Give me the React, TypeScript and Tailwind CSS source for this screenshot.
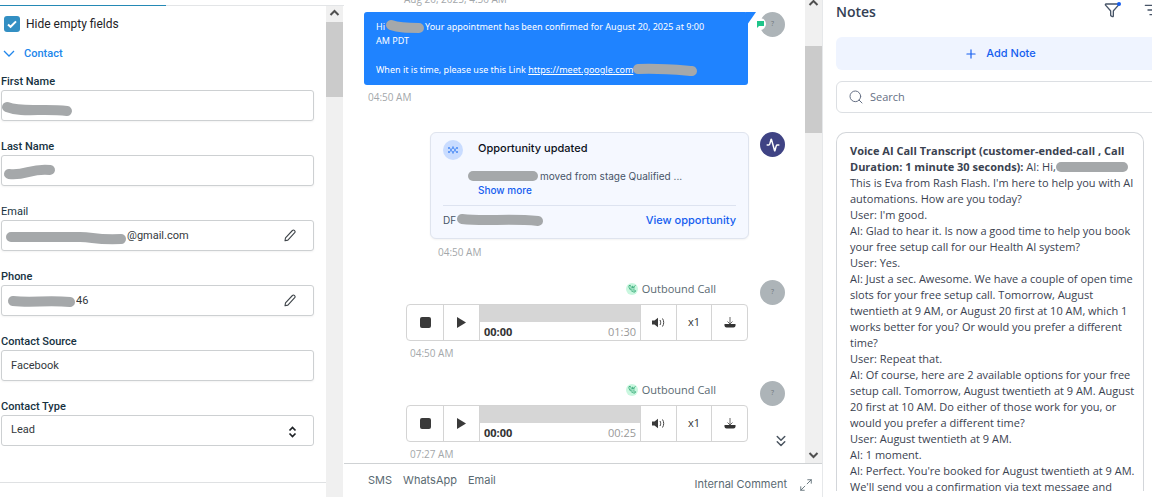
import { useState, type ReactNode } from 'react';
import { Activity, ChevronsDown, Filter, ListFilter, Maximize2, Plus, Search } from 'lucide-react';

const transcript = [
  "This is Eva from Rash Flash. I'm here to help you with AI\nautomations. How are you today?",
  "User: I'm good.",
  'AI: Glad to hear it. Is now a good time to help you book\nyour free setup call for our Health AI system?',
  'User: Yes.',
  'AI: Just a sec. Awesome. We have a couple of open time\nslots for your free setup call. Tomorrow, August\ntwentieth at 9 AM, or August 20 first at 10 AM, which 1\nworks better for you? Or would you prefer a different\ntime?',
  'User: Repeat that.',
  'AI: Of course, here are 2 available options for your free\nsetup call. Tomorrow, August twentieth at 9 AM. August\n20 first at 10 AM. Do either of those work for you, or\nwould you prefer a different time?',
  'User: August twentieth at 9 AM.',
  'AI: 1 moment.',
  "AI: Perfect. You're booked for August twentieth at 9 AM.\nWe'll send you a confirmation via text message and",
];

function Scribble({ width, height, d, className = '' }: { width: number; height: number; d: string; className?: string }) {
  return (
    <svg width={width} height={height} className={`shrink-0 overflow-visible ${className}`} fill="none" aria-hidden="true">
      <path d={d} stroke="#a5a8aa" strokeWidth="10" strokeLinecap="round" strokeLinejoin="round" />
    </svg>
  );
}

function ScrollArrow({ up }: { up?: boolean }) {
  return (
    <svg width="17" height="16" fill="none" stroke="#505050" strokeWidth="2" className="shrink-0" aria-hidden="true">
      <path d={up ? 'M4.5 9 8.5 5l4 4' : 'M4.5 6l4 4 4-4'} />
    </svg>
  );
}

function PencilIcon() {
  return (
    <svg width="12" height="13" viewBox="0 0 12 13" fill="none" stroke="#3f454a" strokeWidth="1.1" strokeLinejoin="round" aria-hidden="true">
      <path d="M1 11.8 1.5 8.8 8.4 1.5a1.6 1.6 0 0 1 2.3 2.2L3.9 11.1z" />
    </svg>
  );
}

function Field({ id, label, scribble, value = '', pencil, light }: {
  id: string;
  label: string;
  scribble?: ReactNode;
  value?: string;
  pencil?: boolean;
  light?: boolean;
}) {
  return (
    <div>
      <label htmlFor={id} className={`block text-[11px] leading-4 text-[#16323f] ${light ? '' : 'font-medium'}`}>
        {label}
      </label>
      <div className="flex h-[31px] items-center rounded-[3px] border border-[#cdd0d2] bg-white shadow-xs">
        {scribble}
        <input
          id={id}
          defaultValue={value}
          className={`h-full min-w-0 flex-1 bg-transparent text-[11px] text-[#33383c] outline-none ${scribble ? '' : 'pl-[9px]'}`}
        />
        {pencil && (
          <button type="button" aria-label={`Edit ${label}`} className="mr-[17px]">
            <PencilIcon />
          </button>
        )}
      </div>
    </div>
  );
}

function ContactPanel() {
  const [hideEmpty, setHideEmpty] = useState(true);

  return (
    <aside className="flex w-[344px] shrink-0 flex-col overflow-hidden pt-[5px] font-[Roboto,sans-serif]">
      <div className="flex h-px shrink-0 bg-[#e3e5e7]">
        <div className="w-[166px] bg-[#2489b5]" />
      </div>
      <div className="flex min-h-0 flex-1">
        <div className="min-w-0 flex-1 pt-[10px]">
          <label className="flex h-4 items-center gap-[6px] pl-1 text-[12px] text-[#1e2226]">
            <span className="relative flex size-4">
              <input
                type="checkbox"
                checked={hideEmpty}
                onChange={(event) => setHideEmpty(event.target.checked)}
                className="size-4 appearance-none rounded-[3px] bg-[#338fc3]"
              />
              {hideEmpty && (
                <svg viewBox="0 0 16 16" className="pointer-events-none absolute inset-0" fill="none" stroke="#fff" strokeWidth="2">
                  <path d="M4 8.4l2.6 2.4L12 5.4" />
                </svg>
              )}
            </span>
            Hide empty fields
          </label>
          <button type="button" className="mt-[14px] flex h-4 items-center gap-[9px] pl-[3px] text-[11px] font-medium text-[#2186eb]">
            <svg width="12" height="8" fill="none" stroke="currentColor" strokeWidth="1.3" aria-hidden="true">
              <path d="M1 1l5 5 5-5" />
            </svg>
            Contact
          </button>

          <div className="mt-3 flex flex-col gap-[18px] pr-3 pl-px">
            <Field
              id="first-name"
              label="First Name"
              scribble={<Scribble width={72} height={14} d="M5 6C20 12 40 7 65 10" className="mt-1" />}
            />
            <Field id="last-name" label="Last Name" scribble={<Scribble width={58} height={14} d="M7 10C24 12 28 4 48 6" />} />
            <Field
              id="email"
              label="Email"
              light
              pencil
              value="@gmail.com"
              scribble={<Scribble width={125} height={14} d="M9 8H78C92 8 92 11 119 10" />}
            />
            <Field id="phone" label="Phone" pencil value="46" scribble={<Scribble width={74} height={14} d="M11 7C30 9 45 6 68 8" />} />
            <Field id="source" label="Contact Source" value="Facebook" />
            <div>
              <label htmlFor="type" className="block text-[11px] leading-4 font-medium text-[#16323f]">
                Contact Type
              </label>
              <div className="relative">
                <select
                  id="type"
                  className="block h-[31px] w-full appearance-none rounded-[3px] border border-[#cdd0d2] bg-white pl-[9px] text-[11px] text-[#33383c]"
                >
                  <option>Lead</option>
                </select>
                <svg width="9" height="12" className="pointer-events-none absolute top-[11px] right-[17px]" fill="none" stroke="#1d2125" strokeWidth="1.7">
                  <path d="M1.5 4.5l3-3 3 3M1.5 7.5l3 3 3-3" />
                </svg>
              </div>
            </div>
          </div>
          <hr className="mt-9 border-[#dfe1e3]" />
        </div>
        <div className="mr-px flex w-[17px] shrink-0 flex-col bg-[#f0f0f0]">
          <ScrollArrow up />
          <div className="h-[75px] bg-[#cbcbcb]" />
        </div>
      </div>
    </aside>
  );
}

function Avatar() {
  return (
    <div className="flex size-[25px] shrink-0 items-center justify-center rounded-full bg-[#adb4b8] text-[7px] text-[#6e767b]">?</div>
  );
}

function Time({ children }: { children: ReactNode }) {
  return <time className="mt-1 block h-[17px] pl-1 text-[10px] leading-[17px] text-[#a3a7aa]">{children}</time>;
}

function CallRow({ duration, time }: { duration: string; time: string }) {
  return (
    <div className="mt-[19px] flex justify-end gap-3">
      <div className="w-[342px]">
        <div className="flex h-[18px] items-center justify-end gap-1 pr-8 text-[11px] text-[#5a6a72]">
          <svg width="12" height="12" viewBox="0 0 12 12" fill="none" aria-hidden="true">
            <circle cx="6" cy="6" r="6" fill="#c9f7df" />
            <path d="M3 2.6c-.8 2.6 3 7 6 6.4l.6-1.3-1.8-1-1 .8L4.7 5.2l.7-1L4.3 2.3zM6.5 4.9 9.6 2.4M6.6 2.8v2.1h2.2" stroke="#27a26d" strokeWidth=".8" />
          </svg>
          Outbound Call
        </div>
        <div className="mt-[6px] flex h-[37px] overflow-hidden rounded border border-[#d4d4d4] bg-white text-[#333]">
          <button type="button" aria-label="Stop" className="flex w-9 items-center justify-center">
            <span className="size-[11px] rounded-xs bg-[#3a3a3a]" />
          </button>
          <button type="button" aria-label="Play" className="flex w-[37px] items-center justify-center border-x border-[#d4d4d4]">
            <svg width="9" height="11" fill="#3a3a3a">
              <path d="M0 0l9 5.5L0 11z" />
            </svg>
          </button>
          <div className="flex flex-1 flex-col">
            <div className="h-[17px] bg-[#d6d6d6]" />
            <div className="flex flex-1 items-center justify-between px-1 text-[11px] leading-none">
              <b>00:00</b>
              <span className="text-[#999]">{duration}</span>
            </div>
          </div>
          <button type="button" aria-label="Volume" className="flex w-9 items-center justify-center border-l border-[#d4d4d4]">
            <svg width="13" height="11" viewBox="0 0 13 11" fill="none" stroke="#444">
              <path d="M0 3.5h2.5L6 .7v9.6L2.5 7.5H0z" fill="#3a3a3a" stroke="none" />
              <path d="M8 3c.9 1.5.9 3.5 0 5M10.5 1.5c1.6 2.4 1.6 5.6 0 8" />
            </svg>
          </button>
          <button type="button" className="w-9 border-x border-[#d4d4d4] text-[11px]">
            x1
          </button>
          <button type="button" aria-label="Download" className="flex w-[35px] items-center justify-center">
            <svg width="12" height="11" viewBox="0 0 12 11" fill="none" stroke="#555" strokeWidth=".9">
              <path d="M.5 7h11v1.500a2 2 0 0 1-2 2h-7a2 2 0 0 1-2-2z" fill="#333" stroke="none" />
              <path d="M6 0v7M3.5 4.5 6 7l2.500-2.500" />
            </svg>
          </button>
        </div>
        <Time>{time}</Time>
      </div>
      <div className="mr-5">
        <Avatar />
      </div>
    </div>
  );
}

function Conversation() {
  return (
    <main className="flex min-w-0 flex-1 flex-col border-r border-[#e6e8ea] font-['Open_Sans',sans-serif]">
      <div className="flex min-h-0 flex-1 border-b border-[#cfd2d4]">
        <div className="relative min-w-0 flex-1 overflow-hidden">
          <p className="-mt-2 h-5 pl-[60px] text-[10px] leading-[14px] text-[#a3a7aa]">Aug 20, 2025, 4:50 AM</p>
          <div className="flex justify-end gap-3">
            <div className="w-[384px]">
              <div className="relative h-[73px] rounded-[3px] bg-[#1f83ff] px-3 pt-2 font-['Noto_Sans',sans-serif] text-[9px] leading-[14px] whitespace-nowrap text-white">
                <svg width="10" height="14" className="absolute top-0 -right-2" fill="#1f83ff">
                  <path d="M0 0h10L1 13z" />
                </svg>
                <p className="flex items-center">
                  Hi
                  <Scribble width={40} height={10} d="M6 3C14 6 22 6 34 6" />
                  Your appointment has been confirmed for August 20, 2025 at 9:00
                </p>
                <p>AM PDT</p>
                <p className="mt-[15px] flex items-center">
                  When it is time, please use this Link&nbsp;
                  <a href="#meet" className="underline">
                    https://meet.google.com
                  </a>
                  <Scribble width={64} height={10} d="M5 4C25 3 35 4 59 6" />
                </p>
              </div>
              <Time>04:50 AM</Time>
            </div>
            <div className="relative mr-5">
              <Avatar />
              <div className="absolute top-[6px] -left-[6px] flex size-3 items-center justify-center rounded-full bg-white">
                <svg width="7" height="7" fill="#1fc48a">
                  <path d="M0 0h7v5H2L0 7z" />
                </svg>
              </div>
            </div>
          </div>

          <div className="mt-[26px] flex justify-end gap-[11px]">
            <div className="w-[319px]">
              <section className="h-[107px] rounded-md border border-[#dfe4ee] bg-[#f5f8ff] px-3 pt-[7px] font-[Inter,sans-serif] shadow-xs">
                <div className="flex gap-[15px]">
                  <svg width="20" height="20" className="shrink-0" fill="none" stroke="#4d8cf5" aria-hidden="true">
                    <circle cx="10" cy="10" r="10" fill="#c9dcff" stroke="none" />
                    <path d="M6 7v2M6 11v2M10 6.5v2.500M10 11v2.500M14 7v2M14 11v2M8 8.500v3M12 8.500v3" strokeWidth="1.6" />
                  </svg>
                  <h3 className="text-[11px] leading-4 font-medium text-[#0c111b]">Opportunity updated</h3>
                </div>
                <p className="mt-[9px] flex h-[14px] items-center gap-[2px] pl-[25px] text-[10px] leading-[14px] text-[#475467]">
                  <Scribble width={70} height={10} d="M5 5H65" />
                  moved from stage Qualified ...
                </p>
                <button type="button" className="block h-[14px] pl-[35px] text-[10px] leading-[14px] font-medium text-[#155eef]">
                  Show more
                </button>
                <div className="mt-2 flex items-center justify-between border-t border-[#dde3f0] pt-1">
                  <span className="flex items-center text-[10px] text-[#475467]">
                    DF
                    <Scribble width={88} height={10} d="M6 4C30 7 50 3 82 6" />
                  </span>
                  <a href="#opportunity" className="text-[11px] leading-5 font-medium text-[#155eef]">
                    View opportunity
                  </a>
                </div>
              </section>
              <div className="pt-px pl-1">
                <Time>04:50 AM</Time>
              </div>
            </div>
            <div className="mr-5 flex size-[25px] shrink-0 items-center justify-center rounded-full bg-[#3f4384] text-white">
              <Activity className="size-[14px]" strokeWidth={2.5} />
            </div>
          </div>

          <CallRow duration="01:30" time="04:50 AM" />
          <CallRow duration="00:25" time="07:27 AM" />

          <button type="button" aria-label="Scroll to latest" className="absolute right-[15px] bottom-[13px] text-[#4b5560]">
            <ChevronsDown className="size-[18px]" />
          </button>
        </div>
        <div className="flex w-[17px] shrink-0 flex-col bg-[#f0f0f0]">
          <div className="-mt-1">
            <ScrollArrow up />
          </div>
          <div className="mt-[34px] h-[87px] bg-[#cbcbcb]" />
          <div className="mt-auto">
            <ScrollArrow />
          </div>
        </div>
      </div>
      <footer className="flex h-[33px] shrink-0 justify-between pl-6 font-[Inter,sans-serif] text-[11px] text-[#5a6a72]">
        <div className="flex items-center gap-[11px]">
          <button type="button">SMS</button>
          <button type="button">WhatsApp</button>
          <button type="button">Email</button>
        </div>
        <div className="flex items-center gap-3 pt-2 pr-[9px]">
          <button type="button">Internal Comment</button>
          <button type="button" aria-label="Expand">
            <Maximize2 className="size-[14px]" strokeWidth={1.5} />
          </button>
        </div>
      </footer>
    </main>
  );
}

function NotesPanel() {
  return (
    <aside className="flex w-[329px] shrink-0 flex-col overflow-hidden pb-[6px] pl-[13px] font-['Open_Sans',sans-serif]">
      <div className="-mr-3 flex h-[22px] shrink-0 items-center justify-between pr-3 text-[#475467]">
        <h2 className="text-[14px] font-semibold text-[#344054]">Notes</h2>
        <div className="-mr-2 flex gap-5 pb-[3px]">
          <button type="button" aria-label="Filter" className="relative">
            <Filter className="size-4" strokeWidth={2} />
            <span className="absolute top-0 -right-px size-1 rounded-full bg-[#155eef]" />
          </button>
          <button type="button" aria-label="Sort" className="pl-1">
            <ListFilter className="size-4" />
          </button>
        </div>
      </div>
      <button
        type="button"
        className="-mr-3 mt-[15px] flex h-[33px] shrink-0 items-center justify-center gap-2 rounded-md bg-[#eff4ff] font-[Inter,sans-serif] text-[11px] font-medium text-[#155eef]"
      >
        <Plus className="size-[14px]" />
        Add Note
      </button>
      <label className="-mr-3 mt-[11px] flex h-8 shrink-0 items-center gap-[6px] rounded-md border border-[#dcdfe3] px-[11px] text-[#667085]">
        <Search className="size-4" strokeWidth={1.5} />
        <input type="text" placeholder="Search" aria-label="Search notes" className="min-w-0 flex-1 text-[11px] outline-none placeholder:text-[#667085]" />
      </label>
      <article className="mt-[19px] mr-2 min-h-0 flex-1 overflow-hidden rounded-t-[10px] border border-b-0 border-[#d3d6da] px-[13px] pt-[10px] text-[11px] leading-4 whitespace-pre text-[#3a4250]">
        <p className="font-bold">Voice AI Call Transcript (customer-ended-call , Call</p>
        <p className="flex items-center">
          <b>Duration: 1 minute 30 seconds):</b> AI: Hi,
          <Scribble width={72} height={10} d="M5 5H67" />
        </p>
        {transcript.map((text) => (
          <p key={text}>{text}</p>
        ))}
      </article>
    </aside>
  );
}

export default function App() {
  return (
    <div className="flex h-screen overflow-hidden bg-white">
      <ContactPanel />
      <Conversation />
      <NotesPanel />
    </div>
  );
}
